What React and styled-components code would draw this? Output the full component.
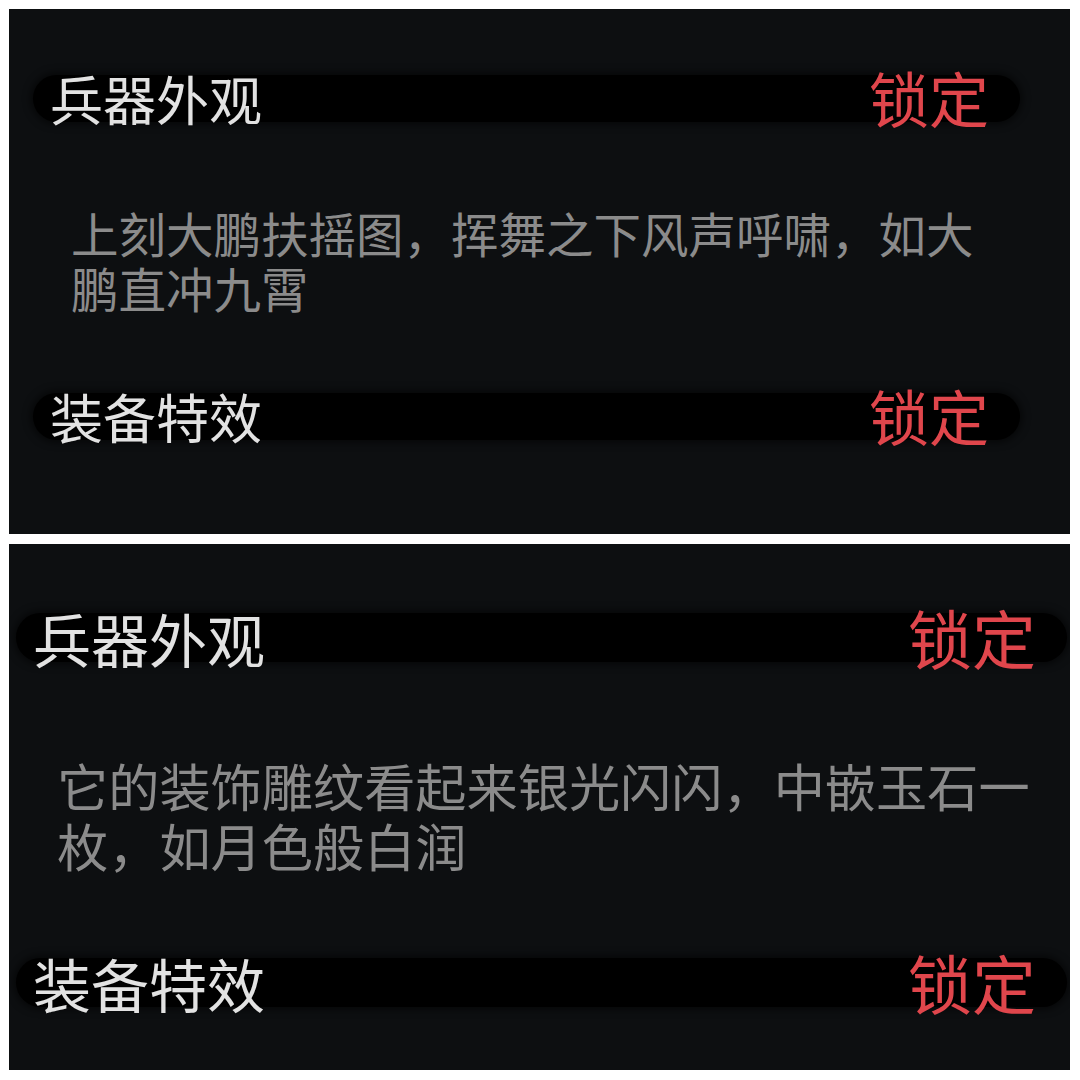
import React from "react";
import styled, { createGlobalStyle } from "styled-components";

const GlobalStyle = createGlobalStyle`
  html, body {
    margin: 0;
    padding: 0;
    background: #ffffff;
  }
  body {
    font-family: "Noto Sans CJK SC", "Noto Sans", sans-serif;
    font-weight: 400;
  }
`;

const Page = styled.div`
  display: flex;
  flex-direction: column;
  gap: 10px;
  padding: 9px 10px 10px 9px;
  width: 1080px;
  box-sizing: border-box;
`;

const Card = styled.section`
  display: flex;
  flex-direction: column;
  height: ${(p) => p.$size.height}px;
  padding-top: ${(p) => p.$size.top}px;
  box-sizing: border-box;
  background: #0d0f11;
  overflow: hidden;
`;

const Bar = styled.div`
  display: flex;
  align-items: center;
  justify-content: space-between;
  height: ${(p) => p.$size.barHeight}px;
  margin: 0 ${(p) => p.$size.barRight}px 0 ${(p) => p.$size.barLeft}px;
  padding: 0 ${(p) => p.$size.lockPad}px 0 ${(p) => p.$size.titlePad}px;
  border-radius: 999px;
  background: #000000;
  box-shadow: 0 0 7px 3px rgba(0, 0, 0, 0.5);
`;

const Title = styled.span`
  font-size: ${(p) => p.$size.title}px;
  line-height: 1;
  color: #e2e2e2;
  white-space: nowrap;
`;

const Lock = styled.span`
  font-size: ${(p) => p.$size.lock}px;
  line-height: 1;
  color: #e0464c;
  white-space: nowrap;
  transform: translateY(-2px);
`;

const Desc = styled.p`
  margin: ${(p) => p.$size.descTop}px 0 ${(p) => p.$size.descBottom}px
    ${(p) => p.$size.descLeft}px;
  width: ${(p) => p.$size.descWidth}px;
  font-size: ${(p) => p.$size.desc}px;
  line-height: ${(p) => p.$size.descLine}px;
  color: #8b8b8b;
`;

const small = {
  height: 525,
  top: 66,
  barHeight: 47,
  barLeft: 24,
  barRight: 50,
  titlePad: 17,
  lockPad: 31,
  title: 53,
  lock: 60,
  desc: 47.5,
  descLine: 55,
  descTop: 83,
  descBottom: 78,
  descLeft: 62,
  descWidth: 910,
};

const large = {
  height: 526,
  top: 69,
  barHeight: 49,
  barLeft: 7,
  barRight: 3,
  titlePad: 17,
  lockPad: 31,
  title: 58,
  lock: 64,
  desc: 51.2,
  descLine: 60,
  descTop: 93,
  descBottom: 83,
  descLeft: 48,
  descWidth: 985,
};

const cards = [
  {
    size: small,
    text: "上刻大鹏扶摇图，挥舞之下风声呼啸，如大鹏直冲九霄",
  },
  {
    size: large,
    text: "它的装饰雕纹看起来银光闪闪，中嵌玉石一枚，如月色般白润",
  },
];

const Section = ({ size, label }) => (
  <Bar $size={size}>
    <Title $size={size}>{label}</Title>
    <Lock $size={size}>锁定</Lock>
  </Bar>
);

const App = () => {
  return (
    <>
      <GlobalStyle />
      <Page>
        {cards.map((card, i) => (
          <Card key={i} $size={card.size}>
            <Section size={card.size} label="兵器外观" />
            <Desc $size={card.size}>{card.text}</Desc>
            <Section size={card.size} label="装备特效" />
          </Card>
        ))}
      </Page>
    </>
  );
};

export default App;
